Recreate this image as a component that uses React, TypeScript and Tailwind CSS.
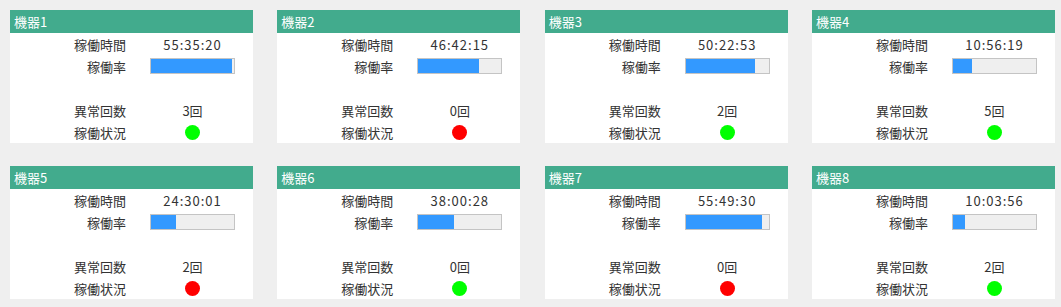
const machines = [
  { name: "機器1", time: "55:35:20", rate: 97, errors: 3, ok: true },
  { name: "機器2", time: "46:42:15", rate: 73.5, errors: 0, ok: false },
  { name: "機器3", time: "50:22:53", rate: 83.5, errors: 2, ok: true },
  { name: "機器4", time: "10:56:19", rate: 23, errors: 5, ok: true },
  { name: "機器5", time: "24:30:01", rate: 30, errors: 2, ok: false },
  { name: "機器6", time: "38:00:28", rate: 43, errors: 0, ok: true },
  { name: "機器7", time: "55:49:30", rate: 92, errors: 0, ok: false },
  { name: "機器8", time: "10:03:56", rate: 15, errors: 2, ok: true },
];

type Machine = (typeof machines)[number];

const Row = ({ label, children }: { label?: string; children?: React.ReactNode }) => (
  <div className="flex h-[22px] items-center">
    <div className="w-[116px] text-right">{label}</div>
    <div className="flex flex-1 justify-center pl-[6px]">{children}</div>
  </div>
);

const MachineCard = ({ m }: { m: Machine }) => {
  return (
    <div className="w-[243px] h-[133px] bg-white">
      <div className="h-[23px] bg-[#42ab8d] px-[4px] flex items-center text-white">{m.name}</div>
      <Row label="稼働時間">
        <span className="tracking-[1px]">{m.time}</span>
      </Row>
      <Row label="稼働率">
        <div className="w-[85px] h-[16px] border border-[#c4c4c4] bg-[#efefef]">
          <div className="h-full bg-[#3399ff]" style={{ width: `${m.rate}%` }} />
        </div>
      </Row>
      <Row />
      <Row label="異常回数">
        <span>{m.errors}回</span>
      </Row>
      <Row label="稼働状況">
        <div className={`w-[15px] h-[15px] rounded-full ${m.ok ? "bg-[#00ff00]" : "bg-[#ff0000]"}`} />
      </Row>
    </div>
  );
};

export default function App() {
  return (
    <div
      className="w-[1061px] h-[307px] bg-[#efefef] px-[10px] pt-[10px] text-[13px] leading-none text-[#333]"
      style={{ fontFamily: '"Noto Sans CJK JP", "Noto Sans", sans-serif' }}
    >
      <div className="grid grid-cols-[repeat(4,243px)] gap-x-[24.33px] gap-y-[23px]">
        {machines.map((m) => (
          <MachineCard key={m.name} m={m} />
        ))}
      </div>
    </div>
  );
}
